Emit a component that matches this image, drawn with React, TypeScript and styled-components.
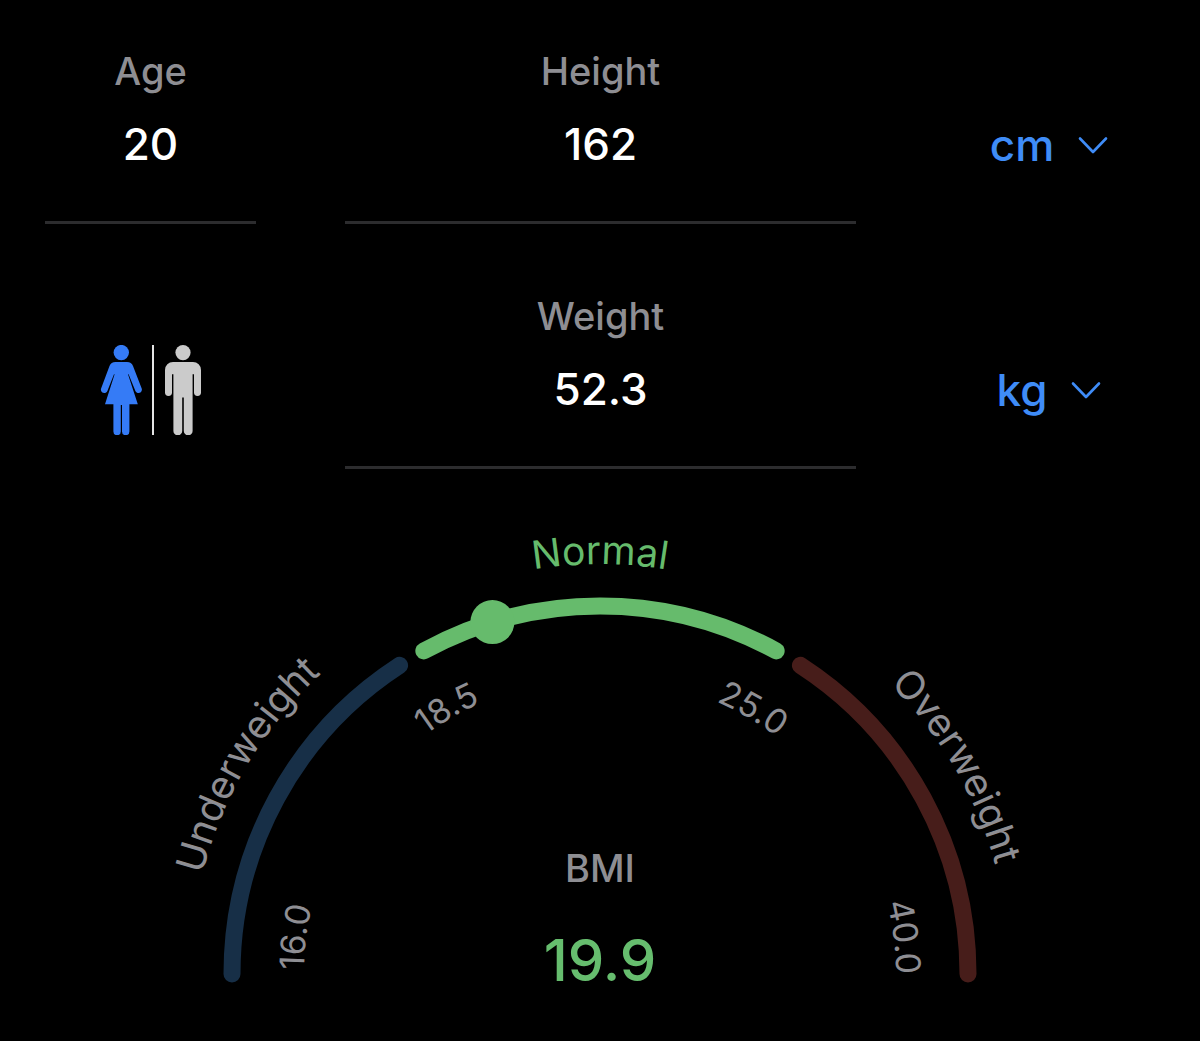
import React, { useState } from "react";
import styled, { createGlobalStyle } from "styled-components";

const GlobalStyle = createGlobalStyle`
  * { box-sizing: border-box; }
  body {
    margin: 0;
    background: #000;
    color: #fff;
    font-family: Inter, "Liberation Sans", sans-serif;
  }
`;

const Page = styled.main`
  min-height: 100vh;
  background: #000;
`;

const FormGrid = styled.form`
  display: grid;
  grid-template-columns: 1fr 2fr 1fr;
`;

const Cell = styled.div`
  display: flex;
  flex-direction: column;
  padding: 48px 44px 21px 45px;
`;

const FieldLabel = styled.label`
  margin-bottom: 2px;
  color: #8e8e93;
  font-size: 38px;
  line-height: 46px;
  font-weight: 500;
  text-align: center;
`;

const FieldInput = styled.input`
  width: 100%;
  height: 128px;
  padding: 0 0 29px;
  border: 0;
  border-bottom: 3px solid #2c2c2e;
  border-radius: 0;
  outline: none;
  background: transparent;
  color: #fff;
  font: inherit;
  font-size: 44px;
  font-weight: 500;
  text-align: center;
`;

const ControlCell = styled.div`
  display: flex;
  justify-content: center;
  align-items: center;
  height: 98px;
  margin-top: 96px;
`;

const UnitPicker = styled.div`
  display: grid;
  grid-template-columns: auto;
  align-items: center;
  color: #3f8cf7;
`;

const UnitSelect = styled.select`
  grid-area: 1 / 1;
  appearance: none;
  field-sizing: content;
  padding: 0 56px 0 0;
  border: 0;
  outline: none;
  background: transparent;
  color: inherit;
  font: inherit;
  font-size: 44px;
  line-height: 56px;
  font-weight: 500;
  cursor: pointer;

  option { color: #000; }
`;

const Chevron = styled.svg`
  grid-area: 1 / 1;
  justify-self: end;
  width: 32px;
  height: 18px;
  pointer-events: none;
`;

const SexGroup = styled.fieldset`
  display: flex;
  margin: 0;
  padding: 0;
  border: 0;
`;

const SexOption = styled.label<{ $active: boolean }>`
  display: grid;
  color: ${(p) => (p.$active ? "#357bf6" : "#cbcbcb")};
  cursor: pointer;

  svg, input { grid-area: 1 / 1; }
  svg { height: 90px; }
`;

const HiddenRadio = styled.input`
  width: 100%;
  height: 100%;
  margin: 0;
  opacity: 0;
`;

const Divider = styled.span`
  width: 2px;
  margin: 0 11px 0 10px;
  background: #e4e4e4;
`;

const Gauge = styled.section`
  display: grid;
  justify-items: center;
  width: 100%;
  max-width: 900px;
  margin: 0 auto;
`;

const Dial = styled.svg`
  grid-area: 1 / 1;
  width: 100%;
`;

const ArcText = styled.text<{ $size: number; $color: string }>`
  fill: ${(p) => p.$color};
  font-size: ${(p) => p.$size}px;
  text-anchor: middle;
`;

const Result = styled.div`
  grid-area: 1 / 1;
  align-self: end;
  display: flex;
  flex-direction: column;
  align-items: center;
  gap: 32px;
  padding-bottom: 45px;
`;

const ResultLabel = styled.span`
  color: #8e8e93;
  font-size: 38px;
  line-height: 48px;
  font-weight: 500;
`;

const ResultValue = styled.output`
  color: #66bd6e;
  font-size: 58px;
  line-height: 72px;
  font-weight: 500;
`;

const CX = 450;
const CY = 484;
const RADIUS = 368;
const GREEN = "#66bb6c";
const GREY = "#8e8e93";

/* Angles run clockwise from the left end of the dial. */
const point = (r: number, deg: number) => {
  const a = (deg * Math.PI) / 180;
  return [CX - r * Math.cos(a), CY - r * Math.sin(a)];
};

const arc = (r: number, from: number, to: number) => {
  const [x1, y1] = point(r, from);
  const [x2, y2] = point(r, to);
  const large = to - from > 180 ? 1 : 0;
  return `M${x1} ${y1}A${r} ${r} 0 ${large} 1 ${x2} ${y2}`;
};

const bands = [
  { from: 0, to: 57, color: "#172f47" },
  { from: 61.4, to: 118.6, color: GREEN },
  { from: 123, to: 180, color: "#471d1a" },
];

const arcLabels = [
  { text: "Underweight", path: "outer", at: 30.6, size: 39, color: GREY },
  { text: "Normal", path: "outer", at: 90, size: 39, color: GREEN },
  { text: "Overweight", path: "outer", at: 149.8, size: 39, color: GREY },
  { text: "16.0", path: "inner", at: 7, size: 34, color: GREY },
  { text: "18.5", path: "inner", at: 60, size: 34, color: GREY },
  { text: "25.0", path: "inner", at: 120, size: 34, color: GREY },
  { text: "40.0", path: "inner", at: 173, size: 34, color: GREY },
];

function Field({ id, label, initial }: { id: string; label: string; initial: string }) {
  const [value, setValue] = useState(initial);
  return (
    <Cell>
      <FieldLabel htmlFor={id}>{label}</FieldLabel>
      <FieldInput id={id} inputMode="decimal" value={value} onChange={(e) => setValue(e.target.value)} />
    </Cell>
  );
}

function Unit({ label, options }: { label: string; options: string[] }) {
  return (
    <ControlCell>
      <UnitPicker>
        <UnitSelect aria-label={label} defaultValue={options[0]}>
          {options.map((o) => (
            <option key={o}>{o}</option>
          ))}
        </UnitSelect>
        <Chevron viewBox="0 0 32 18" fill="none" stroke="currentColor" strokeWidth="2.6" strokeLinecap="round" strokeLinejoin="round" aria-hidden="true">
          <path d="M2 2.5L15 16L28 2.5" />
        </Chevron>
      </UnitPicker>
    </ControlCell>
  );
}

function SexPicker() {
  const [sex, setSex] = useState("female");
  return (
    <ControlCell>
      <SexGroup aria-label="Sex">
        <SexOption $active={sex === "female"}>
          <HiddenRadio type="radio" name="sex" aria-label="Female" checked={sex === "female"} onChange={() => setSex("female")} />
          <svg width="42" viewBox="0 0 42 90" fill="currentColor" aria-hidden="true">
            <circle cx="21.3" cy="7.6" r="7.7" />
            <path d="M15.5 17H27C30 17 32 18.5 33 21L41.7 43.5C43 47.5 37.4 50 35.4 46L28.6 29.3H28L37.8 59.3H29.4V86.5A3.4 3.4 0 0 1 22 86.5V60H20.8V86.5A3.4 3.4 0 0 1 13.4 86.5V59.3H5L14.6 29.3H14L7.4 46C5.4 50-.2 47.5 1.1 43.5L9.5 21C10.5 18.5 12.5 17 15.5 17Z" />
          </svg>
        </SexOption>
        <Divider />
        <SexOption $active={sex === "male"}>
          <HiddenRadio type="radio" name="sex" aria-label="Male" checked={sex === "male"} onChange={() => setSex("male")} />
          <svg width="36" viewBox="0 0 36 90" fill="currentColor" aria-hidden="true">
            <circle cx="18" cy="7.6" r="7.6" />
            <path d="M8 17H28A8 8 0 0 1 36 25V47.5A3.4 3.4 0 0 1 29 47.5V29.3H27.6V86A3.8 3.8 0 0 1 18.8 86V52.5H17.2V86A3.8 3.8 0 0 1 8.4 86V29.3H7V47.5A3.4 3.4 0 0 1 0 47.5V25A8 8 0 0 1 8 17Z" />
          </svg>
        </SexOption>
      </SexGroup>
    </ControlCell>
  );
}

export default function App() {
  const [dotX, dotY] = point(RADIUS, 73);
  return (
    <Page>
      <GlobalStyle />
      <FormGrid>
        <Field id="age" label="Age" initial="20" />
        <Field id="height" label="Height" initial="162" />
        <Unit label="Height unit" options={["cm", "ft"]} />
        <SexPicker />
        <Field id="weight" label="Weight" initial="52.3" />
        <Unit label="Weight unit" options={["kg", "lb"]} />
      </FormGrid>
      <Gauge aria-label="Body mass index">
        <Dial viewBox="0 0 900 551">
          <defs>
            <path id="outer" d={arc(410, 0, 180)} />
            <path id="inner" d={arc(296, -10, 190)} />
          </defs>
          {bands.map((b) => (
            <path key={b.from} d={arc(RADIUS, b.from, b.to)} fill="none" stroke={b.color} strokeWidth="17" strokeLinecap="round" />
          ))}
          <circle cx={dotX} cy={dotY} r="22" fill={GREEN} />
          {arcLabels.map((l) => (
            <ArcText key={l.text} $size={l.size} $color={l.color}>
              <textPath
                href={`#${l.path}`}
                startOffset={l.path === "outer" ? `${(l.at / 180) * 100}%` : `${((l.at + 10) / 200) * 100}%`}
              >
                {l.text}
              </textPath>
            </ArcText>
          ))}
        </Dial>
        <Result>
          <ResultLabel>BMI</ResultLabel>
          <ResultValue>19.9</ResultValue>
        </Result>
      </Gauge>
    </Page>
  );
}
